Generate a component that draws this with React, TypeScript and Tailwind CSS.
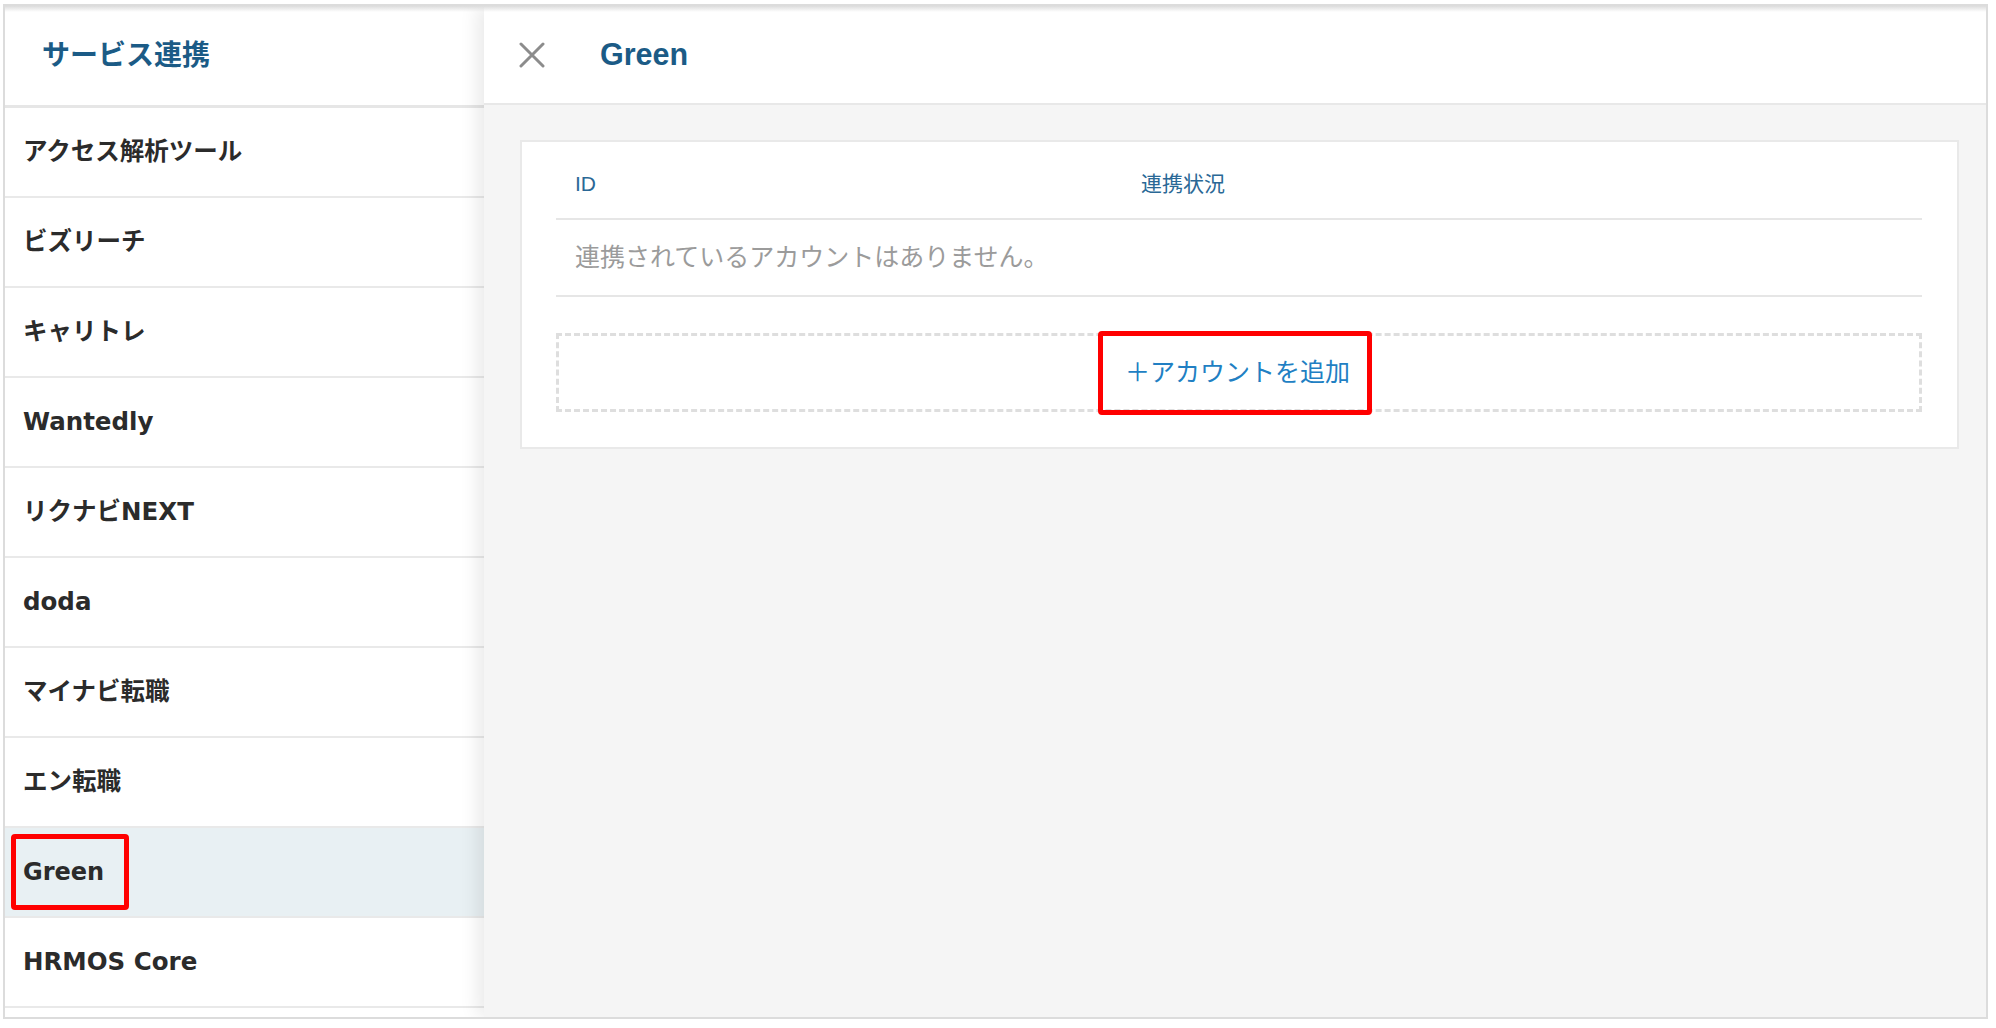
import React from "react";

const services = [
  "アクセス解析ツール",
  "ビズリーチ",
  "キャリトレ",
  "Wantedly",
  "リクナビNEXT",
  "doda",
  "マイナビ転職",
  "エン転職",
  "Green",
  "HRMOS Core",
];

const font = {
  fontFamily: '"Liberation Sans", "Noto Sans CJK JP", sans-serif',
};

// sidebar labels: wider latin face to match the Hiragino look
const itemFont = {
  fontFamily: '"DejaVu Sans", "Noto Sans CJK JP", sans-serif',
};

const CloseIcon = () => (
  <svg width="26" height="26" viewBox="0 0 26 26" fill="none">
    <path
      d="M2 2 L24 24 M24 2 L2 24"
      stroke="#8c8c8c"
      strokeWidth="3"
      strokeLinecap="round"
    />
  </svg>
);

export default function App() {
  return (
    <div className="min-h-screen bg-white pl-[3px] pt-[4px]" style={font}>
      <div className="relative flex h-[1015px] w-[1985px] overflow-hidden border-2 border-[#dcdcdc] bg-white">
        {/* sidebar */}
        <div className="flex w-[479px] shrink-0 flex-col">
          <div className="flex h-[102px] items-center border-b-[3px] border-[#e6e6e6] pl-[37px]">
            <span className="text-[28px] font-bold text-[#1b5b86]">
              サービス連携
            </span>
          </div>
          {services.map((name) => {
            const active = name === "Green";
            return (
              <div
                key={name}
                style={itemFont}
                className={
                  active
                    ? "flex h-[90px] items-center border-b-2 border-[#e9e9e9] bg-[#e8f0f3] pl-[18px]"
                    : "flex h-[90px] items-center border-b-2 border-[#e9e9e9] pl-[18px]"
                }
              >
                {active ? (
                  <span className="-ml-[12px] flex h-[76px] w-[118px] items-center rounded-[4px] border-[5px] border-[#ff0000] pl-[7px] text-[24px] font-bold text-[#2b2b2b]">
                    {name}
                  </span>
                ) : (
                  <span className="text-[24.5px] font-bold text-[#2b2b2b]">
                    {name}
                  </span>
                )}
              </div>
            );
          })}
        </div>

        {/* detail panel */}
        <div className="relative z-10 flex flex-1 flex-col bg-[#f5f5f5] shadow-[-6px_0_18px_rgba(0,0,0,0.09)]">
          <div className="flex h-[99px] items-center border-b-2 border-[#e8e8e8] bg-white">
            <button type="button" className="ml-[35px] flex items-center">
              <CloseIcon />
            </button>
            <span className="ml-[55px] text-[30.5px] font-bold text-[#1b5b86]">
              Green
            </span>
          </div>

          <div className="ml-[36px] mr-[27px] mt-[35px] border-2 border-[#e9e9e9] bg-white pb-[35px] pl-[34px] pr-[35px] pt-[8px]">
            <div className="flex h-[70px] items-center border-b-2 border-[#e6e6e6] text-[21px] text-[#2a6896]">
              <div className="w-[566px] pl-[19px]">ID</div>
              <div className="pl-[19px]">連携状況</div>
            </div>
            <div className="flex h-[77px] items-center border-b-2 border-[#e6e6e6] pl-[19px] text-[25px] text-[#9b9b9b]">
              連携されているアカウントはありません。
            </div>
            <div className="mt-[36px] flex h-[79px] items-center justify-center border-[3px] border-dashed border-[#dedede]">
              <button
                type="button"
                className="-ml-[8px] flex h-[84px] shrink-0 items-center rounded-[4px] border-[5px] border-[#ff0000] pl-[22px] pr-[17px] text-[25px] text-[#217fc3]"
              >
                ＋アカウントを追加
              </button>
            </div>
          </div>
        </div>

        {/* top edge shading */}
        <div className="pointer-events-none absolute left-0 right-0 top-0 z-20 h-[6px] bg-gradient-to-b from-[#dcdcdc] to-transparent" />
      </div>
    </div>
  );
}
